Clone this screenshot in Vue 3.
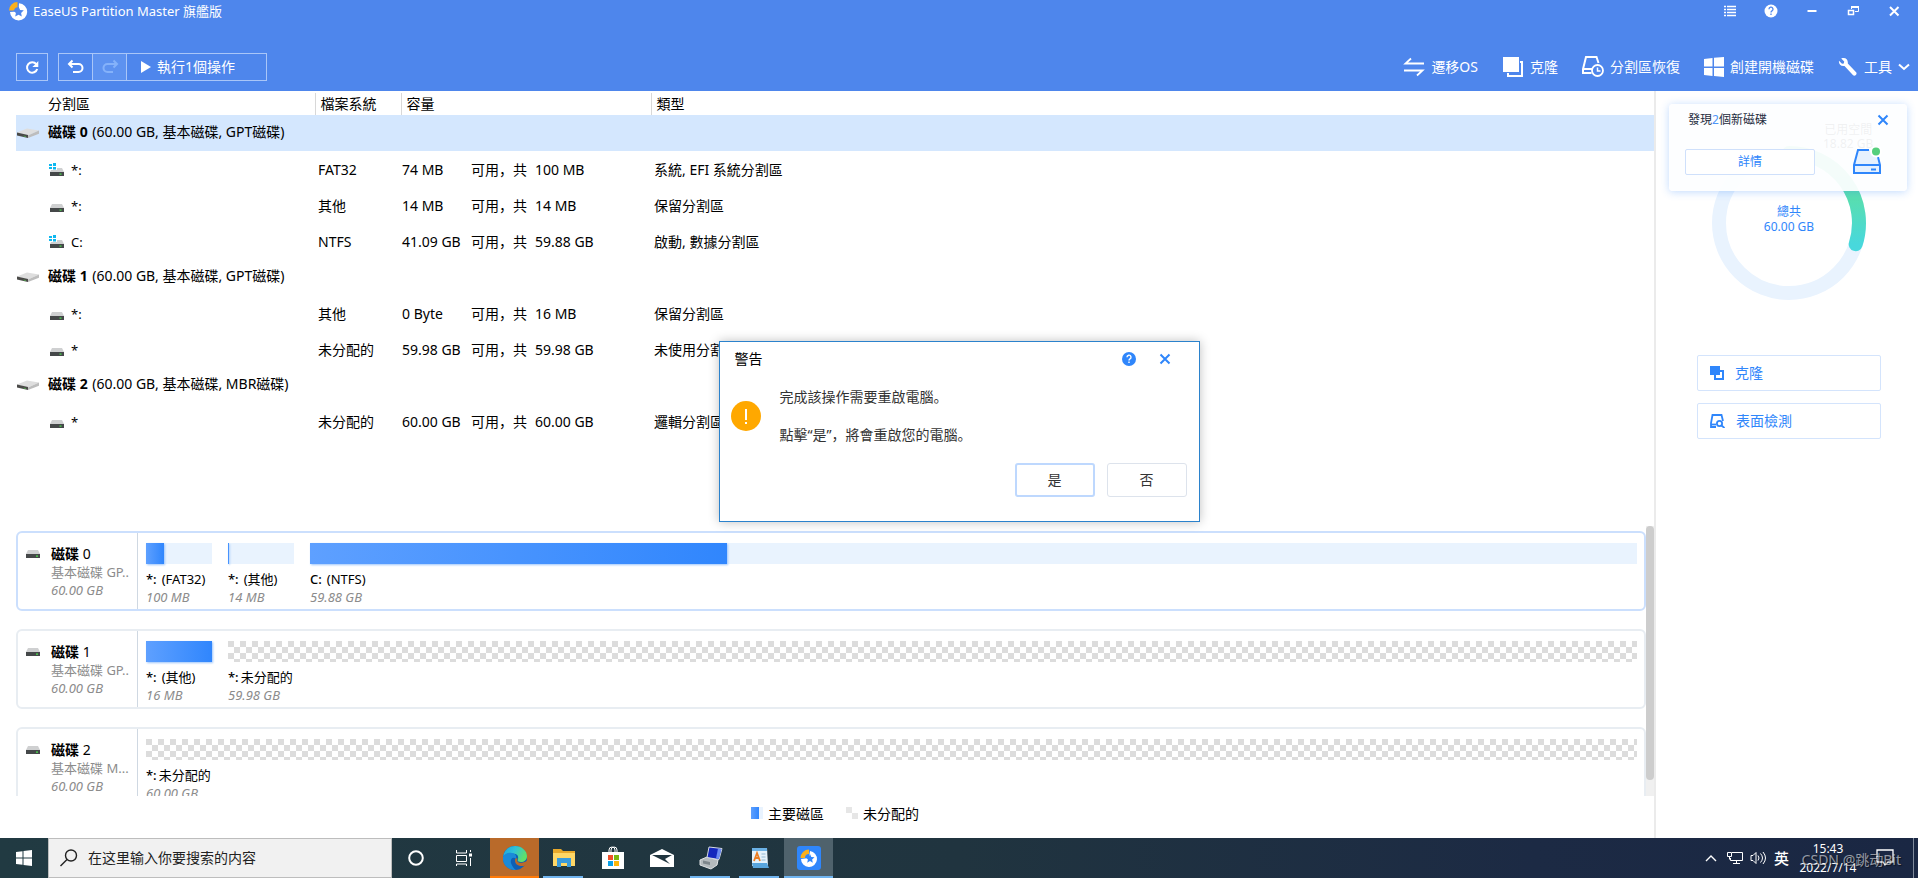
<script setup>
import { ref } from 'vue'

const disks = [
  {
    id: 0,
    info: '(60.00 GB, 基本磁碟, GPT磁碟)',
    selected: true,
    parts: [
      { name: '*:', win: true, fs: 'FAT32', free: '74 MB', total: '100 MB', type: '系統, EFI 系統分割區' },
      { name: '*:', win: false, fs: '其他', free: '14 MB', total: '14 MB', type: '保留分割區' },
      { name: 'C:', win: true, fs: 'NTFS', free: '41.09 GB', total: '59.88 GB', type: '啟動, 數據分割區' },
    ],
  },
  {
    id: 1,
    info: '(60.00 GB, 基本磁碟, GPT磁碟)',
    selected: false,
    parts: [
      { name: '*:', win: false, fs: '其他', free: '0 Byte', total: '16 MB', type: '保留分割區' },
      { name: '*', win: false, fs: '未分配的', free: '59.98 GB', total: '59.98 GB', type: '未使用分割區' },
    ],
  },
  {
    id: 2,
    info: '(60.00 GB, 基本磁碟, MBR磁碟)',
    selected: false,
    parts: [
      { name: '*', win: false, fs: '未分配的', free: '60.00 GB', total: '60.00 GB', type: '邏輯分割區' },
    ],
  },
]

const maps = [
  {
    id: 0,
    kind: '基本磁碟 GP..',
    size: '60.00 GB',
    selected: true,
    parts: [
      { letter: '*:', label: '(FAT32)', size: '100 MB', used: 27, wide: false, free: false },
      { letter: '*:', label: '(其他)', size: '14 MB', used: 2, wide: false, free: false },
      { letter: 'C:', label: '(NTFS)', size: '59.88 GB', used: 31.4, wide: true, free: false },
    ],
  },
  {
    id: 1,
    kind: '基本磁碟 GP..',
    size: '60.00 GB',
    selected: false,
    parts: [
      { letter: '*:', label: '(其他)', size: '16 MB', used: 100, wide: false, free: false },
      { letter: '*:', label: '未分配的', size: '59.98 GB', used: 0, wide: true, free: true },
    ],
  },
  {
    id: 2,
    kind: '基本磁碟 M...',
    size: '60.00 GB',
    selected: false,
    parts: [
      { letter: '*:', label: '未分配的', size: '60.00 GB', used: 0, wide: true, free: true },
    ],
  },
]

const query = ref('')
</script>

<template>
  <div class="desktop">
    <header class="header">
      <div class="titlebar">
        <svg class="logo" viewBox="0 0 20 20" width="20" height="20" aria-hidden="true">
          <path d="M11 2.200A8.600 8.600 0 1 1 2 11l8.500-.5z" fill="#fff" />
          <path d="M1 9.500A8.500 8.500 0 0 1 9.500 1v5.200A4 4 0 0 0 6 9.500z" fill="#fbb01c" />
          <path d="M10.500 5.500l1.600 3.400 3.700.4-2.700 2.600.7 3.700-3.300-1.800-3.300 1.800.7-3.700-2.700-2.600 3.700-.4z" fill="#4e86ec" />
        </svg>
        <h1 class="app-title">EaseUS Partition Master 旗艦版</h1>
        <div class="window-buttons">
          <button type="button" aria-label="Menu">
            <svg viewBox="0 0 16 16" width="16" height="16"><path d="M2 3.500h2M5 3.500h9M2 6.500h2M5 6.500h9M2 9.500h2M5 9.500h9M2 12.500h2M5 12.500h9" stroke="#fff" stroke-width="1.300" /></svg>
          </button>
          <button type="button" aria-label="Help">
            <svg viewBox="0 0 16 16" width="16" height="16"><circle cx="8" cy="8" r="6.500" fill="#fff" /><path d="M6 6.300a2 2 0 1 1 3 1.600c-.7.400-1 .7-1 1.500M8 10.600v1.300" fill="none" stroke="#4e86ec" stroke-width="1.300" /></svg>
          </button>
          <button type="button" aria-label="Minimize">
            <svg viewBox="0 0 16 16" width="16" height="16"><path d="M3.500 8h9" stroke="#fff" stroke-width="2" /></svg>
          </button>
          <button type="button" aria-label="Restore">
            <svg viewBox="0 0 16 16" width="16" height="16" fill="none" stroke="#fff"><path d="M6.500 6V3.500h7v5H10" /><path d="M6 4h8" stroke-width="2" /><path d="M3.500 7.500h5v4h-5z" stroke-width="1.500" /></svg>
          </button>
          <button type="button" aria-label="Close">
            <svg viewBox="0 0 16 16" width="16" height="16"><path d="M4 4l8.500 8.500M12.500 4L4 12.500" stroke="#fff" stroke-width="2" /></svg>
          </button>
        </div>
      </div>
      <div class="toolbar">
        <div class="tool-left">
          <button type="button" class="box refresh" aria-label="Refresh">
            <svg viewBox="0 0 16 16" width="16" height="16"><path d="M12.300 5.200A5.200 5.200 0 1 0 13.200 10" fill="none" stroke="#fff" stroke-width="2" /><path d="M14.300 2v6H8.300l2.200-2z" fill="#fff" /></svg>
          </button>
          <div class="box group">
            <button type="button" class="step" aria-label="Undo">
              <svg viewBox="0 0 18 16" width="18" height="16" fill="none" stroke="#fff" stroke-width="2"><path d="M2 5h9.500a4 4 0 0 1 0 8H6" /><path d="M5.500 1.500L2 5l3.500 3.500" /></svg>
            </button>
            <button type="button" class="step redo" aria-label="Redo">
              <svg viewBox="0 0 18 16" width="18" height="16" fill="none" stroke="#85b2fa" stroke-width="2"><path d="M16 5H6.500a4 4 0 0 0 0 8H12" /><path d="M12.500 1.500L16 5l-3.500 3.500" /></svg>
            </button>
            <button type="button" class="run">
              <svg viewBox="0 0 12 12" width="12" height="12"><path d="M1 0l10 6-10 6z" fill="#fff" /></svg>
              執行1個操作
            </button>
          </div>
        </div>
        <nav class="tool-right">
          <button type="button">
            <svg viewBox="0 0 22 20" width="22" height="20" fill="none" stroke="#fff" stroke-width="1.800"><path d="M8 1.500L2.500 6.500H21" /><path d="M14 18.500l5.500-5H1" /></svg>
            遷移OS
          </button>
          <button type="button">
            <svg viewBox="0 0 22 20" width="22" height="20"><path d="M1 0h16v15H1z" fill="#fff" /><path d="M18 5h2v14H6v-3" fill="none" stroke="#fff" stroke-width="2" /></svg>
            克隆
          </button>
          <button type="button">
            <svg viewBox="0 0 22 22" width="22" height="22" fill="none" stroke="#fff"><path d="M9.500 17H1v-4L4 1h10.500l2 6M1 13h9" stroke-width="2" /><path d="M21 14.500a5.500 5.500 0 1 1-11 0 5.500 5.500 0 0 1 11 0z" stroke-width="1.800" /><path d="M15.500 11.500v3.500h3" stroke-width="1.500" /></svg>
            分割區恢復
          </button>
          <button type="button">
            <svg viewBox="0 0 20 20" width="20" height="20" fill="#fff"><path d="M0 2l8.500-1v8.500H0zM10 .8L20 0v9.500H10zM0 11h8.500v8L0 18zM10 11h10v9l-10-1z" /></svg>
            創建開機磁碟
          </button>
          <button type="button" class="tools">
            <svg viewBox="0 0 20 20" width="20" height="20"><path d="M3.200 1.600l3 3-.4 1.800-1.800.4-3-3C.4 6.500 2.500 9.700 6.500 9l8.600 9.300c1.800 1.600 4.600-1.200 3-3L9.800 6.500C10.300 3 7.500-.2 3.200 1.600z" fill="#fff" /></svg>
            工具
            <svg viewBox="0 0 12 8" width="12" height="8"><path d="M1 1.500l5 4.500 5-4.500" fill="none" stroke="#fff" stroke-width="2" /></svg>
          </button>
        </nav>
      </div>
    </header>

    <main class="body">
      <section class="content">
        <table class="list">
          <colgroup><col class="c-name" /><col class="c-fs" /><col class="c-size" /><col /></colgroup>
          <thead>
            <tr><th class="first">分割區</th><th>檔案系統</th><th>容量</th><th>類型</th></tr>
          </thead>
          <tbody v-for="d in disks" :key="d.id">
            <tr class="disk" :class="{ selected: d.selected }">
              <td colspan="4">
                <div class="disk-line">
                  <svg viewBox="0 0 22 13" width="22" height="13" aria-hidden="true">
                    <path d="M0 6.500L10 2.500l12 2-11 5z" fill="#dedede" /><path d="M11 9.500L22 4.500v3.200L11 12z" fill="#bdbdbd" /><path d="M0 6.500l11 2.500v3L0 9.500z" fill="#4a4a48" /><path d="M6.500 10l2.500.6" stroke="#4f9a4c" />
                  </svg>
                  <span><b>磁碟 {{ d.id }}</b> {{ d.info }}</span>
                </div>
              </td>
            </tr>
            <tr v-for="(p, i) in d.parts" :key="i" class="part">
              <td>
                <div class="part-line">
                  <svg viewBox="0 0 16 14" width="16" height="14" aria-hidden="true">
                    <path d="M3 5h10l2 4H1z" fill="#cfd0d1" /><path d="M1 9h14v4H1z" fill="#454849" /><path d="M10.500 10.500h2v1.200h-2z" fill="#4be04d" />
                    <template v-if="p.win"><path d="M0 0h8v7H0z" fill="#fff" /><path d="M0 1h3v2H0zM4 0h3v3H4zM0 4h3v2H0zM4 4h3v2.500H4z" fill="#0db8f0" /></template>
                  </svg>
                  <span>{{ p.name }}</span>
                </div>
              </td>
              <td>{{ p.fs }}</td>
              <td>
                <div class="cap"><span class="cap-free">{{ p.free }}</span><span class="cap-of">可用，共</span><span>{{ p.total }}</span></div>
              </td>
              <td>{{ p.type }}</td>
            </tr>
          </tbody>
        </table>

        <div class="map">
          <div class="cards">
            <article v-for="m in maps" :key="m.id" class="card" :class="{ active: m.selected }">
              <div class="card-head">
                <svg viewBox="0 0 14 8" width="14" height="8" aria-hidden="true"><path d="M2 0h10l2 4H0z" fill="#cfd0d1" /><path d="M0 4h14v4H0z" fill="#454849" /><path d="M10 5.500h2v1.200h-2z" fill="#4be04d" /></svg>
                <div class="card-text">
                  <div class="card-name"><b>磁碟</b> {{ m.id }}</div>
                  <div class="muted">{{ m.kind }}</div>
                  <div class="muted it">{{ m.size }}</div>
                </div>
              </div>
              <div class="segments">
                <div v-for="(s, i) in m.parts" :key="i" class="segment" :class="{ wide: s.wide }">
                  <div class="bar" :class="{ unallocated: s.free }">
                    <div v-if="!s.free" class="used" :style="{ width: s.used + '%' }"></div>
                  </div>
                  <div class="seg-label" :class="{ tight: s.free }"><span class="letter">{{ s.letter }}</span><span>{{ s.label }}</span></div>
                  <div class="muted it">{{ s.size }}</div>
                </div>
              </div>
            </article>
          </div>
          <div class="scroll"><div class="thumb"></div></div>
        </div>

        <footer class="legend">
          <span class="key"><i class="swatch primary"></i>主要磁區</span>
          <span class="key"><i class="swatch empty"></i>未分配的</span>
        </footer>
      </section>

      <aside class="side">
        <div class="donut">
          <svg viewBox="0 0 156 156" width="156" height="156" aria-hidden="true">
            <defs><linearGradient id="usage" x1="0" y1="0" x2="0" y2="1"><stop offset="0" stop-color="#67dfa0" /><stop offset=".5" stop-color="#58deb0" /><stop offset="1" stop-color="#48d8dc" /></linearGradient></defs>
            <circle cx="78" cy="78" r="70" fill="none" stroke="#e9f3fe" stroke-width="14" />
            <path d="M78 8A70 70 0 0 1 144.700 99.200" fill="none" stroke="url(#usage)" stroke-width="14" stroke-linecap="round" />
          </svg>
          <div class="donut-total">總共<br />60.00 GB</div>
          <div class="donut-used">已用空間<br />18.82 GB</div>
        </div>
        <div class="side-actions">
          <button type="button">
            <svg viewBox="0 0 14 14" width="14" height="14"><path d="M0 0h10v9H0z" fill="#2f86fb" /><path d="M10 5h3v8H5V9" fill="none" stroke="#2f86fb" stroke-width="2" /></svg>
            克隆
          </button>
          <button type="button">
            <svg viewBox="0 0 15 14" width="15" height="14" fill="none" stroke="#2f86fb" stroke-width="1.800"><path d="M6 13H1V9l1.500-8h9L13 7" /><path d="M1 10.500h5" /><circle cx="9.500" cy="9.500" r="2.600" /><path d="M11.500 11.500l3 2.500" /></svg>
            表面檢測
          </button>
        </div>
        <section class="notice">
          <div class="notice-text">
            <p>發現<em>2</em>個新磁碟</p>
            <button type="button" class="detail">詳情</button>
          </div>
          <div class="notice-side">
            <button type="button" class="x" aria-label="Close notice">
              <svg viewBox="0 0 12 12" width="12" height="12"><path d="M1.500 1.500l9 9M10.500 1.500l-9 9" stroke="#2f86fb" stroke-width="2" /></svg>
            </button>
            <svg class="drive" viewBox="0 0 30 28" width="30" height="28" aria-hidden="true">
              <path d="M6 3h18l4 15v8H2v-8z" fill="#e6f1fe" /><path d="M17 3H6L2 18v8h26v-8l-2-8M2 18h26" fill="none" stroke="#2f86fb" stroke-width="2" /><path d="M19 22.500h5" stroke="#2f86fb" stroke-width="2" /><circle cx="24" cy="4.500" r="6" fill="#fff" /><circle cx="24" cy="4.500" r="4" fill="#55cf7c" />
            </svg>
          </div>
        </section>
      </aside>
    </main>

    <div class="overlay">
      <div class="dialog" role="dialog" aria-labelledby="warn-title">
        <div class="dialog-head">
          <h2 id="warn-title">警告</h2>
          <button type="button" aria-label="Help">
            <svg viewBox="0 0 14 14" width="14" height="14"><circle cx="7" cy="7" r="7" fill="#2f86fb" /><path d="M5 5.200a2 2 0 1 1 3 1.700c-.7.400-1 .7-1 1.500M7 9.600V11" fill="none" stroke="#fff" stroke-width="1.400" /></svg>
          </button>
          <button type="button" aria-label="Close dialog">
            <svg viewBox="0 0 12 12" width="12" height="12"><path d="M1.500 1.500l9 9M10.500 1.500l-9 9" stroke="#2f86fb" stroke-width="2" /></svg>
          </button>
        </div>
        <div class="dialog-body">
          <svg viewBox="0 0 30 30" width="30" height="30" aria-hidden="true"><circle cx="15" cy="15" r="15" fill="#ffa800" /><path d="M15 8v11M15 21v2" stroke="#fff" stroke-width="2" /></svg>
          <div class="message">
            <p>完成該操作需要重啟電腦。</p>
            <p>點擊“是”，將會重啟您的電腦。</p>
          </div>
        </div>
        <div class="dialog-foot">
          <button type="button" class="primary">是</button>
          <button type="button">否</button>
        </div>
      </div>
    </div>

    <footer class="taskbar">
      <button type="button" class="task narrow" aria-label="Start">
        <svg viewBox="0 0 16 16" width="16" height="16" fill="#fff"><path d="M0 2l6.500-.8v6.300H0zM7.500 1L16 0v7.500H7.500zM0 8.500h6.500v6.300L0 14zM7.500 8.500H16V16l-8.500-1z" /></svg>
      </button>
      <label class="search">
        <svg viewBox="0 0 18 18" width="18" height="18" fill="none" stroke="#222" stroke-width="1.400"><circle cx="11" cy="6.500" r="5.500" /><path d="M7 10.500l-6.500 6.500" /></svg>
        <input v-model="query" type="text" placeholder="在这里输入你要搜索的内容" aria-label="在这里输入你要搜索的内容" />
      </label>
      <button type="button" class="task narrow" aria-label="Cortana">
        <svg viewBox="0 0 16 16" width="16" height="16"><circle cx="8" cy="8" r="6.800" fill="none" stroke="#fff" stroke-width="2" /></svg>
      </button>
      <button type="button" class="task narrow" aria-label="Task view">
        <svg viewBox="0 0 18 18" width="18" height="18" fill="none" stroke="#fff"><path d="M1.500 1v3h10V1M1.500 6.500h10v6h-10zM1.500 17v-2h10v2M15.500 1v2M15.500 9v8" /><path d="M14 4.500h3v3h-3z" fill="#fff" stroke="none" /></svg>
      </button>
      <button type="button" class="task edge" aria-label="Edge">
        <svg viewBox="0 0 24 24" width="24" height="24">
          <defs>
            <linearGradient id="edge-top" x1="0" y1="0" x2="1" y2=".4"><stop offset="0" stop-color="#1ba0e0" /><stop offset=".5" stop-color="#2fc2d8" /><stop offset="1" stop-color="#5fe06a" /></linearGradient>
          </defs>
          <circle cx="12" cy="12" r="12" fill="#0f5fb4" />
          <path d="M0 11C1 4 6 0 12 0c7 0 12 5 12 10 0 4-3 6-6 6-3 0-4-1-3-3 1-5-3-6-6-5-4 0-8 1-9 3z" fill="url(#edge-top)" />
          <path d="M0 11c1-3 5-5 9-4 3 0 5 3 4 6-3-3-6 0-5 4 1 3 3 6 5 7C5 24-1 19 0 11z" fill="#1b8ad8" />
          <path d="M14.500 12.500c-2 4 3 6 9.500 2.500v1.500l-2 3c-4 1.500-10 0-10-5 0-1.500 1-2.500 2.500-2z" fill="#b96a2a" />
        </svg>
      </button>
      <button type="button" class="task open" aria-label="Explorer">
        <svg viewBox="0 0 22 20" width="22" height="20"><path d="M0 1h8l2 2h12v15H0z" fill="#e9a92b" /><path d="M0 5h22v13H0z" fill="#ffd766" /><path d="M4 19v-9h14v9h-4v-4H8v4z" fill="#3a9bdc" /></svg>
      </button>
      <button type="button" class="task" aria-label="Store">
        <svg viewBox="0 0 24 24" width="24" height="24"><path d="M8 7V4a3 3 0 0 1 6 0v3M10 7V4a3 3 0 0 1 6 0v3" fill="none" stroke="#fff" /><path d="M1 6h22v17H1z" fill="#fff" /><path d="M7 9h5v5H7z" fill="#f0502a" /><path d="M13 9h5v5h-5z" fill="#7cb810" /><path d="M7 15h5v5H7z" fill="#0aa1e8" /><path d="M13 15h5v5h-5z" fill="#fdb60a" /></svg>
      </button>
      <button type="button" class="task" aria-label="Mail">
        <svg viewBox="0 0 24 20" width="24" height="20"><path d="M0 7l12-6 12 6v12H0z" fill="#fff" /><path d="M2 7h20l-7 4 5 5-8-4z" fill="#20353f" /></svg>
      </button>
      <button type="button" class="task open" aria-label="Computer management">
        <svg viewBox="0 0 24 24" width="24" height="24"><path d="M1 14l7-3 11 3-1 5-6 4-11-4z" fill="#b4babd" stroke="#e0e3e5" /><path d="M10 1l13 1.500-3 11-12-2z" fill="#1427bd" stroke="#d7dce2" /><path d="M19 2.500l3.500.5-2.500 10-3-.5z" fill="#6c8cf2" /><path d="M4 14.500l7 1.500v3l-7-1.500z" fill="#7d868b" /></svg>
      </button>
      <button type="button" class="task open" aria-label="Document">
        <svg viewBox="0 0 20 22" width="20" height="22"><path d="M2 1h15l1 18H2z" fill="#e5f2fb" /><path d="M2 1h15v3H2z" fill="#6bb1e5" /><path d="M2 16h15l2 5H3z" fill="#58a5dd" /><path d="M4 14l3-8 3 8M5 11h4" fill="none" stroke="#ec7d22" stroke-width="1.800" /><path d="M11.500 7h4M11.500 10h4M11.500 13h4" stroke="#93b9d3" /></svg>
      </button>
      <button type="button" class="task current" aria-label="EaseUS Partition Master">
        <svg viewBox="0 0 24 24" width="24" height="24"><rect width="24" height="24" rx="3" fill="#2f86fb" /><path d="M13 5a8 8 0 1 1-9 8l8-1z" fill="#fff" /><path d="M3.500 12A8.500 8.500 0 0 1 12 3.500V8a4 4 0 0 0-4 4z" fill="#fbb01c" /><path d="M13 8l1.300 3 3.200.3-2.400 2.200.7 3.200-2.800-1.700-2.800 1.700.7-3.200-2.400-2.200 3.200-.3z" fill="#2f86fb" /></svg>
      </button>
      <div class="tray">
        <svg class="more" viewBox="0 0 12 8" width="12" height="8"><path d="M1 7l5-5 5 5" fill="none" stroke="#fff" stroke-width="1.400" /></svg>
        <svg viewBox="0 0 16 14" width="16" height="14" fill="none" stroke="#fff"><path d="M5 1.500h10.500v8H3.500V7M9.500 9.500v3M6 12.500h7M.5 1.500h4v4h-4zM2.500 5.500v3" /></svg>
        <svg viewBox="0 0 17 14" width="17" height="14" fill="none" stroke="#fff"><path d="M1 4.500h2l3-3v11l-3-3H1zM8 4.500q2 2.500 0 5M10.500 2.500q4 4.500 0 9M13 1q5 6 0 12" /></svg>
        <span class="ime">英</span>
        <div class="clock">15:43<br />2022/7/14</div>
        <svg class="note" viewBox="0 0 18 18" width="18" height="18" fill="none" stroke="#fff" stroke-width="1.300"><path d="M1 1h16v12h-5l-3 3-2-3H1z" /></svg>
        <i class="peek"></i>
        <span class="watermark">CSDN @跳动Bit</span>
      </div>
    </footer>
  </div>
</template>

<style>
body { margin: 0; }
</style>

<style scoped>
.desktop {
  position: relative;
  display: flex;
  flex-direction: column;
  min-height: 100vh;
  background: #fff;
  color: #000;
  font: 14px/20px "Noto Sans", "Noto Sans CJK SC", sans-serif;
}
.desktop *, .desktop *::before { box-sizing: border-box; }
button { padding: 0; border: 0; background: none; color: inherit; font: inherit; cursor: pointer; white-space: nowrap; }
svg { display: block; flex: none; }
h1, h2, p { margin: 0; font-size: 14px; font-weight: 400; }

.header { background: #4e86ec; color: #fff; height: 91px; display: flex; flex-direction: column; }
.titlebar { display: flex; align-items: center; height: 22px; padding: 0 4px 0 8px; }
.app-title { flex: 1; margin-left: 5px; font-size: 13px; }
.window-buttons { display: flex; }
.window-buttons button { width: 41px; display: flex; justify-content: center; }
.toolbar { display: flex; justify-content: space-between; align-items: center; padding: 0 8px 0 16px; margin-top: 31px; height: 28px; }
.tool-left { display: flex; gap: 10px; }
.box { border: 1px solid #a9c6f8; height: 28px; }
.refresh { width: 32px; display: flex; align-items: center; justify-content: center; }
.group { display: flex; width: 209px; }
.step { width: 34px; display: flex; align-items: center; justify-content: center; border-right: 1px solid #a9c6f8; }
.redo { background: #5d92f0; }
.run { flex: 1; display: flex; align-items: center; gap: 5px; padding-left: 13px; }
.tool-right { display: flex; gap: 24px; }
.tool-right button { display: flex; align-items: center; gap: 6px; }

.body { flex: 1; display: flex; }
.content { flex: 1; min-width: 0; display: flex; flex-direction: column; }
.list { width: calc(100% - 16px); margin: 2px 0 0 16px; border-collapse: collapse; table-layout: fixed; }
.c-name { width: 299px; }
.c-fs { width: 86px; }
.c-size { width: 250px; }
.list th { height: 22px; padding: 0 0 0 5px; border-right: 1px solid #d8d8d8; font-weight: 400; text-align: left; line-height: 22px; }
.list th.first { padding-left: 32px; }
.list th:last-child { border-right: 0; }
.list td { height: 36px; padding: 2px 0 0 3px; white-space: nowrap; }
.list .disk td { padding: 0 0 2px 1px; }
.list .part td:nth-child(3) { padding-left: 1px; }
.selected { background: #d4e7fe; }
.disk-line { display: flex; align-items: center; gap: 9px; }
.disk-line b { margin-right: 1px; }
.part-line { display: flex; align-items: center; gap: 6px; padding-left: 30px; font-size: 13px; }
.cap { display: flex; }
.cap-free { width: 69px; }
.cap-of { width: 64px; }

.map { display: flex; height: 270px; margin-top: auto; overflow: hidden; padding-left: 16px; }
.cards { flex: 1; min-width: 0; display: flex; flex-direction: column; gap: 18px; padding-top: 5px; }
.card { flex: none; display: flex; height: 80px; border: 2px solid #e8edf2; border-radius: 6px; }
.card.active { border-color: #cbdffd; }
.card-head { flex: none; display: flex; gap: 11px; width: 120px; padding: 12px 0 0 8px; border-right: 1px solid #cfd8e2; }
.card-head svg { margin-top: 5px; }
.card-name { line-height: 18px; }
.muted { color: #8c8c8c; font-size: 13px; line-height: 18px; white-space: nowrap; }
.it { font-style: italic; }
.segments { flex: 1; min-width: 0; display: flex; gap: 16px; padding: 10px 7px 0 8px; }
.segment { width: 66px; flex: none; }
.segment.wide { flex: 1; width: auto; min-width: 0; }
.bar { height: 21px; margin-bottom: 6px; background: #e9f3fe; }
.bar.unallocated { background: repeating-conic-gradient(#dcdcdc 0 25%, #fff 0 50%) 6px 0 / 12px 12px; }
.used { height: 100%; background: linear-gradient(90deg, #5ea0ff, #3086fd); box-shadow: 1px 1px 2px #9cc5fb; }
.seg-label { display: flex; gap: 5px; font-size: 13px; line-height: 18px; white-space: nowrap; }
.seg-label.tight { gap: 2px; }
.letter { font-weight: 500; }
.scroll { width: 8px; background: #f0f0f0; }
.thumb { height: 254px; border-radius: 4px; background: #cdcdcd; }
.legend { display: flex; justify-content: center; gap: 22px; height: 42px; padding: 8px 0 0 16px; }
.key { display: flex; align-items: flex-start; gap: 5px; }
.swatch { width: 12px; height: 12px; margin-top: 3px; }
.swatch.primary { background: linear-gradient(90deg, #5ea0ff, #3086fd 67%, #e9f3fe 67%); }
.swatch.empty { background: repeating-conic-gradient(#e6e6e6 0 25%, #fff 0 50%) 6px 0 / 12px 12px; }

.side { position: relative; flex: none; width: 264px; padding: 54px 37px 0 41px; border-left: 2px solid #ebebeb; color: #2f86fb; }
.donut { position: relative; width: 156px; margin: 0 auto; }
.donut-total { position: absolute; inset: 59px 0 auto; text-align: center; font-size: 12px; line-height: 15px; }
.donut-used { position: absolute; left: 112px; top: -22px; color: #222; font-size: 12px; line-height: 14px; text-align: center; white-space: nowrap; }
.side-actions { display: flex; flex-direction: column; gap: 12px; margin-top: 54px; }
.side-actions button { display: flex; align-items: center; gap: 11px; height: 36px; padding-left: 12px; border: 1px solid #d4e4fc; border-radius: 2px; }
.notice { position: absolute; top: 13px; left: 13px; right: 11px; height: 87px; display: flex; justify-content: space-between; padding: 7px 18px 0 16px; border-radius: 4px; background: rgba(253, 254, 255, .94); box-shadow: 0 1px 8px rgba(47, 134, 251, .3); }
.notice p { padding-left: 3px; color: #1d2c40; font-size: 12px; line-height: 18px; }
.notice em { color: #4f96f8; font-style: normal; }
.detail { width: 130px; height: 26px; margin-top: 20px; border: 1px solid #cfe0fb; border-radius: 2px; background: #fff; font-size: 12px; }
.notice-side { display: flex; flex-direction: column; align-items: flex-end; gap: 21px; padding-top: 3px; }
.drive { margin-right: 7px; }

.overlay { position: absolute; inset: 0 0 16px; display: flex; align-items: center; justify-content: center; pointer-events: none; }
.dialog { width: 481px; height: 181px; border: 1px solid #2b82cc; background: #fff; box-shadow: 0 0 10px rgba(0, 0, 0, .25); pointer-events: auto; color: #333; }
.dialog-head { display: flex; align-items: center; height: 36px; padding: 0 28px 2px 15px; color: #000; }
.dialog-head h2 { flex: 1; }
.dialog-head button + button { margin-left: 23px; }
.dialog-body { display: flex; align-items: center; gap: 19px; padding-left: 11px; height: 76px; }
.message { display: flex; flex-direction: column; gap: 18px; }
.dialog-foot { display: flex; justify-content: flex-end; gap: 12px; padding: 9px 12px 0; }
.dialog-foot button { width: 80px; height: 34px; border: 1px solid #dde3ec; border-radius: 3px; }
.dialog-foot .primary { border: 2px solid #bed8fe; }

.taskbar { display: flex; height: 40px; background: linear-gradient(90deg, #213a42, #20343f 50%, #1c2a44 80%, #1a2743); color: #fff; }
.task { flex: none; position: relative; width: 49px; display: flex; align-items: center; justify-content: center; }
.task.narrow { width: 48px; }
.edge { margin-left: 2px; background: #b96a2a; box-shadow: inset 0 -2px #ff7a08; }
.open::before { content: ""; position: absolute; left: 4px; right: 5px; bottom: 0; height: 2px; background: #70b4ef; }
.current { background: #4f626c; box-shadow: inset 0 -2px #70b4ef; }
.search { display: flex; align-items: center; gap: 10px; width: 344px; padding: 0 11px; background: #f1f1f1; border: 1px solid #bdbdbd; }
.search input { flex: 1; min-width: 0; padding: 0; border: 0; outline: 0; background: none; font: inherit; color: #222; }
.search input::placeholder { color: #222; opacity: 1; }
.tray { position: relative; display: flex; align-items: center; gap: 7px; margin-left: auto; }
.more { margin-right: 3px; }
.ime { font-size: 15px; font-weight: 500; }
.clock { width: 64px; font-size: 12px; line-height: 19px; text-align: center; white-space: nowrap; }
.note { margin-left: 9px; }
.peek { width: 1px; height: 40px; margin: 0 4px 0 12px; background: #7f8a9b; }
.watermark { position: absolute; right: 17px; top: 12px; color: rgba(255, 255, 255, .55); text-shadow: 1px 1px 1px rgba(0, 0, 0, .5); white-space: nowrap; }
</style>
